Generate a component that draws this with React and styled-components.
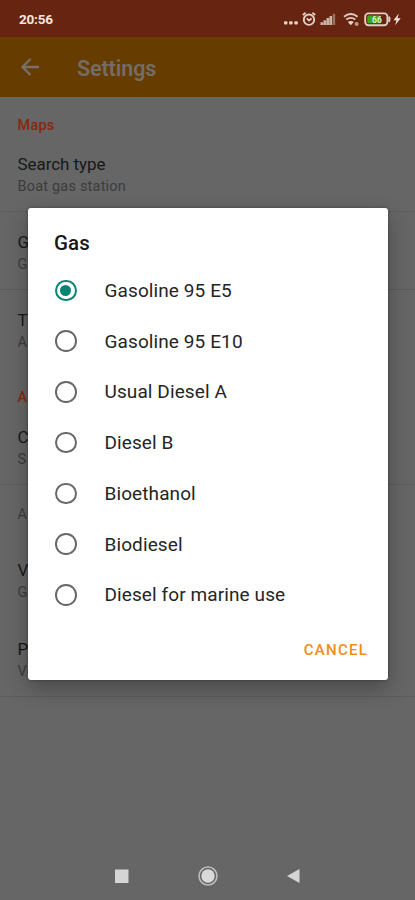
import React from 'react';
import styled, { createGlobalStyle } from 'styled-components';

const GlobalStyle = createGlobalStyle`
  * { box-sizing: border-box; }
  body { margin: 0; background: #666; font-family: Roboto, sans-serif; }
`;

const Screen = styled.div`
  position: relative;
  display: flex;
  flex-direction: column;
  width: 415px;
  height: 900px;
  overflow: hidden;
  background: #666;
`;

const StatusBar = styled.header`
  display: flex;
  align-items: center;
  justify-content: space-between;
  flex: none;
  height: 37px;
  padding: 1px 12px 0 19px;
  background: #672410;
`;

const Clock = styled.span`
  color: #f3e6df;
  font-size: 13.5px;
  font-weight: 700;
  letter-spacing: -0.2px;
`;

const AppBar = styled.div`
  display: flex;
  align-items: center;
  flex: none;
  gap: 35px;
  height: 60px;
  padding: 0 20px;
  background: #663c00;
`;

const AppTitle = styled.h1`
  margin: 0;
  padding-top: 3px;
  color: #736d66;
  font-size: 21.5px;
  line-height: 26px;
  font-weight: 600;
  letter-spacing: -0.1px;
`;

const Preferences = styled.main`
  flex: 1;
  color: #181818;
`;

const Category = styled.h2`
  display: flex;
  align-items: center;
  height: 36px;
  margin: 10px 0 0;
  padding: 0 17.5px;
  color: #86280f;
  font-size: 14.5px;
  font-weight: 500;
  letter-spacing: 0.2px;
`;

const Preference = styled.section`
  height: ${(p) => p.$height}px;
  padding: ${(p) => p.$top}px 17.5px 0;
  border-bottom: 1px solid ${(p) => (p.$divided ? '#5c5c5c' : 'transparent')};
`;

const PrefTitle = styled.div`
  font-size: 17px;
  line-height: 22px;
  letter-spacing: -0.05px;
`;

const PrefSummary = styled.div`
  padding-top: 1px;
  color: #3c3c3c;
  font-size: 14.5px;
  line-height: 21px;
  letter-spacing: 0.2px;
`;

const Navigation = styled.nav`
  display: flex;
  align-items: center;
  justify-content: center;
  flex: none;
  gap: 68px;
  height: 49px;
`;

const Dialog = styled.section`
  position: absolute;
  top: 208px;
  left: 28px;
  display: flex;
  flex-direction: column;
  width: 360px;
  height: 471.5px;
  border-radius: 3px;
  background: #fff;
  box-shadow: 0 9px 22px rgba(0, 0, 0, 0.28), 0 0 3px rgba(0, 0, 0, 0.35);
`;

const DialogTitle = styled.h2`
  margin: 0;
  padding: 22px 26px 0;
  height: 57px;
  color: #171717;
  font-size: 20.5px;
  line-height: 27px;
  font-weight: 500;
  letter-spacing: 0.1px;
`;

const Options = styled.div`
  display: grid;
  grid-auto-rows: 50.75px;
`;

const Option = styled.label`
  display: flex;
  align-items: center;
  gap: 28px;
  padding-left: 27px;
  color: #252525;
  font-size: 19px;
  letter-spacing: 0.1px;
`;

const Radio = styled.span`
  display: grid;
  place-items: center;
  width: 21.5px;
  height: 21.5px;
  border: 2px solid ${(p) => (p.$on ? '#078574' : '#686868')};
  border-radius: 50%;
  &::after {
    content: '';
    width: 11px;
    height: 11px;
    border-radius: 50%;
    background: ${(p) => (p.$on ? '#078574' : 'transparent')};
  }
`;

const Cancel = styled.button`
  align-self: flex-end;
  margin: 18px 20px 0 0;
  padding: 0;
  border: 0;
  background: none;
  color: #f28c12;
  font: 500 15px/24px Roboto, sans-serif;
  letter-spacing: 1.25px;
`;

const preferences = [
  { title: 'Search type', summary: 'Boat gas station', height: 69, top: 10, divided: true },
  { title: 'G', summary: 'G', height: 78, top: 19, divided: true },
  { title: 'T', summary: 'A', height: 79, top: 19 },
];

const appPreferences = [
  { title: 'C', summary: 'S', height: 70, top: 11, divided: true },
  { summary: 'A', height: 57, top: 18 },
  { title: 'V', summary: 'G', height: 77, top: 17 },
  { title: 'P', summary: 'V', height: 78, top: 19, divided: true },
];

const gases = [
  'Gasoline 95 E5', 'Gasoline 95 E10', 'Usual Diesel A', 'Diesel B',
  'Bioethanol', 'Biodiesel', 'Diesel for marine use',
];

function PreferenceList({ items }) {
  return items.map((p, i) => (
    <Preference key={i} $height={p.height} $top={p.top} $divided={p.divided}>
      {p.title && <PrefTitle>{p.title}</PrefTitle>}
      <PrefSummary>{p.summary}</PrefSummary>
    </Preference>
  ));
}

function StatusIcons() {
  return (
    <svg width="120" height="20" viewBox="283 9 120 20" fill="none" stroke="#e0cdc4" strokeWidth="1.5">
      <g fill="#e6d6ce" stroke="none">
        <rect x="284" y="21.2" width="3.4" height="3.4" rx="1" />
        <rect x="289.2" y="21.2" width="3.4" height="3.4" rx="1" />
        <rect x="294.4" y="21.2" width="3.4" height="3.4" rx="1" />
      </g>
      <circle cx="309" cy="19.7" r="5.2" strokeWidth="1.9" />
      <path d="M306.8 18.3 309 20.5l2.6-2M302.8 15l2.8-2.3M312.4 12.7l2.8 2.3" strokeWidth="1.8" />
      <g stroke="none" fill="#cdb3a8">
        <path d="M320.5 22.3h2.7V25h-2.7zM323.5 20.3h2.7V25h-2.7zM326.5 18h2.7v7h-2.7zM329.5 16h2.7v9h-2.7z" />
        <path d="M332.7 13.8h2.5V25h-2.5z" fill="#977063" />
      </g>
      <path d="M344 16.8q6.8-5.4 13.6 0M346.3 19.6q4.5-3.4 9 0" strokeWidth="1.9" />
      <path d="m347.8 22q3-2 6 0l-3 3.2z" fill="#e6d6ce" stroke="none" />
      <circle cx="356.6" cy="24" r="2" fill="#b59a8e" stroke="none" />
      <rect x="365.2" y="13.4" width="22.2" height="11.8" rx="3.2" strokeWidth="1.9" />
      <path d="M389 16.7q1.2 2.6 0 5.2" strokeWidth="2" />
      <rect x="367.3" y="15.4" width="13.5" height="7.8" rx="1" fill="#43a618" stroke="none" />
      <text x="372" y="22.5" fill="#d9efcc" stroke="none" fontSize="8.5" fontWeight="700" fontFamily="Roboto, sans-serif">66</text>
      <path d="m398.8 13.5-5.3 6.8h3l-1.4 5 5.6-7.1h-3.2z" fill="#f1e4dc" stroke="none" />
    </svg>
  );
}

export default function App() {
  return (
    <>
      <GlobalStyle />
      <Screen>
        <StatusBar><Clock>20:56</Clock><StatusIcons /></StatusBar>
        <AppBar>
          <svg width="22" height="22" viewBox="0 0 22 22" fill="none" stroke="#777169" strokeWidth="2.3">
            <path d="M19 11H3M10.5 3l-8 8 8 8" />
          </svg>
          <AppTitle>Settings</AppTitle>
        </AppBar>
        <Preferences>
          <Category>Maps</Category>
          <PreferenceList items={preferences} />
          <Category>A</Category>
          <PreferenceList items={appPreferences} />
        </Preferences>
        <Navigation>
          <svg width="17" height="20" viewBox="0 0 17 20"><path d="M2 3.5h13.5V17H2z" fill="#d5d5d5" /></svg>
          <svg width="20" height="20" viewBox="0 0 20 20">
            <circle cx="10" cy="10" r="9" fill="none" stroke="#bcbcbc" strokeWidth="1.6" />
            <circle cx="10" cy="10" r="6.7" fill="#d9d9d9" />
          </svg>
          <svg width="17" height="20" viewBox="0 0 17 20"><path d="M13.5 3v14L1 10z" fill="#d5d5d5" /></svg>
        </Navigation>
        <Dialog role="dialog" aria-label="Gas">
          <DialogTitle>Gas</DialogTitle>
          <Options>
            {gases.map((gas, i) => (
              <Option key={gas}><Radio $on={i === 0} />{gas}</Option>
            ))}
          </Options>
          <Cancel>CANCEL</Cancel>
        </Dialog>
      </Screen>
    </>
  );
}
